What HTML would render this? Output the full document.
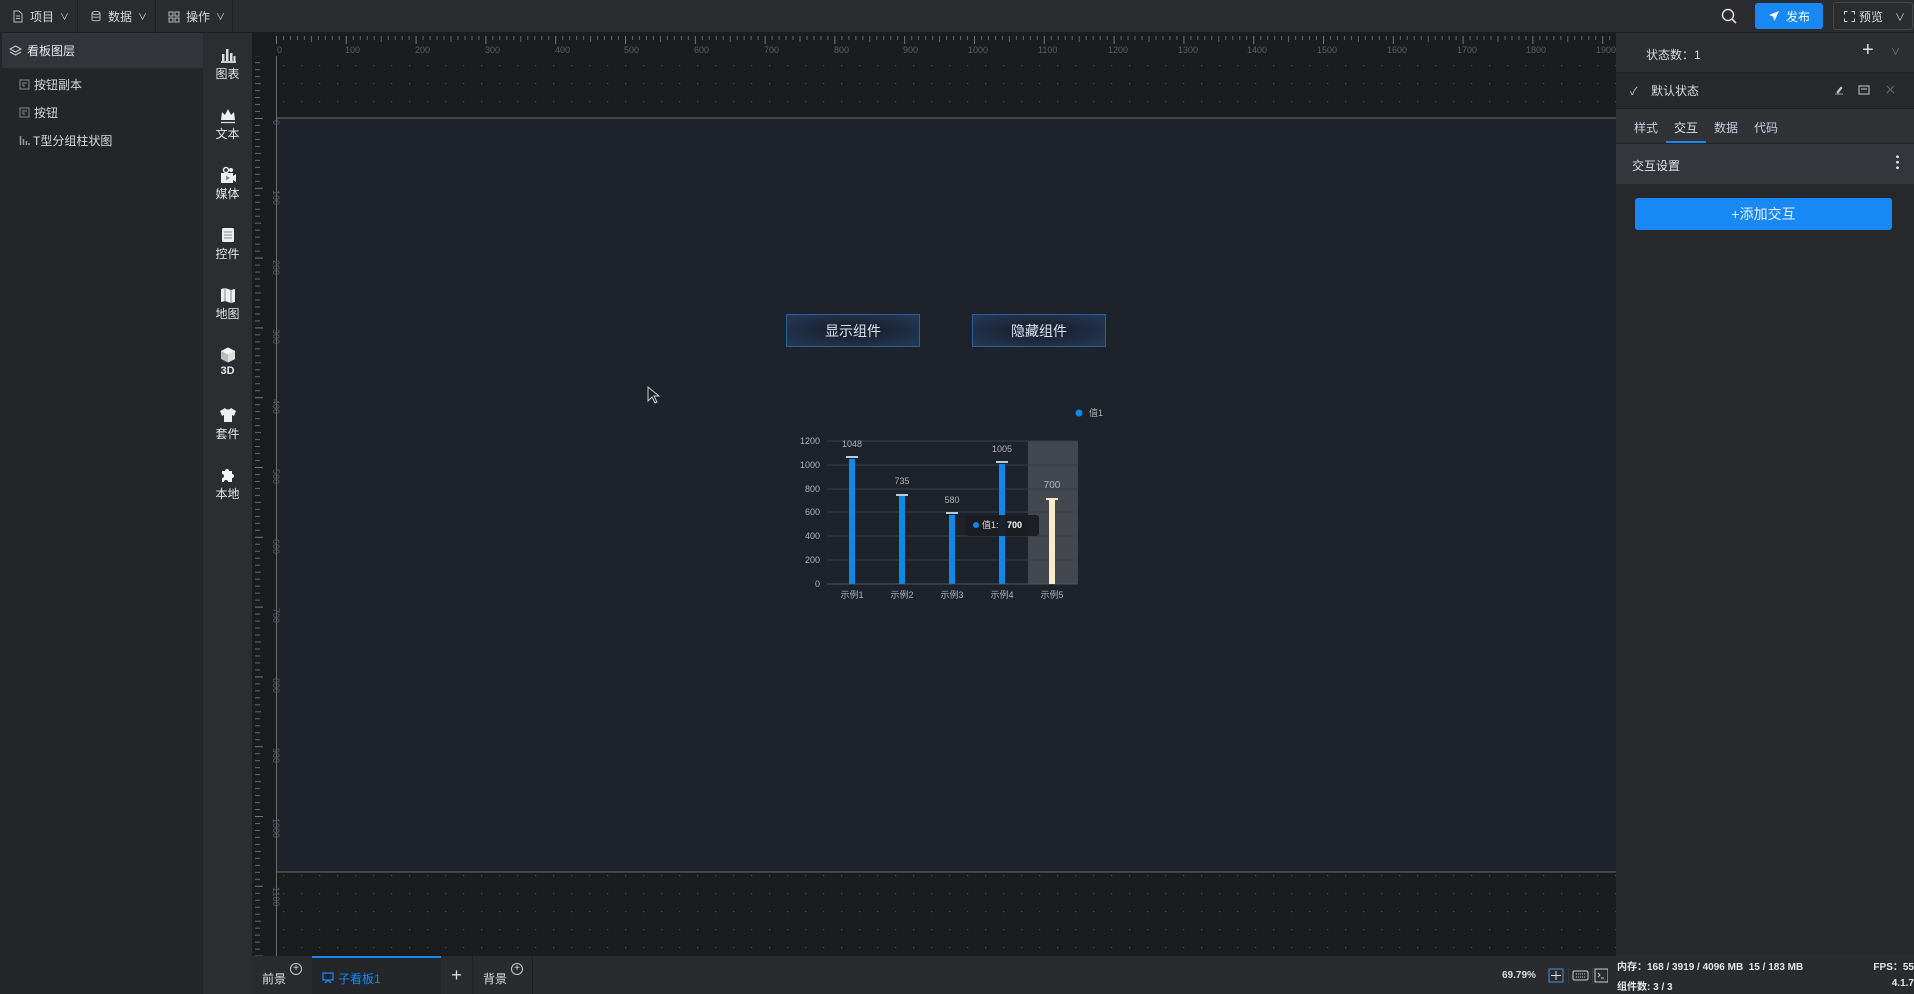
<!DOCTYPE html>
<html><head><meta charset="utf-8"><style>
*{margin:0;padding:0;box-sizing:border-box}
body{width:1914px;height:994px;overflow:hidden;background:#1a1b1d;font-family:"Liberation Sans","Noto Sans CJK SC",sans-serif;color:#d0d2d6;font-size:12px;position:relative}
.abs{position:absolute}
#top{left:0;top:0;width:1914px;height:33px;background:#2b2c30;border-bottom:1px solid #1c1d20}
.menu{top:0;height:33px;display:flex;align-items:center;gap:6px;color:#d6d8dc;font-size:12px;padding-left:12px;border-right:1px solid #202124}
#left{left:0;top:33px;width:203px;height:961px;background:#242528}
#icons{left:203px;top:33px;width:49px;height:961px;background:#2c2d31}
.ic{position:absolute;left:0;width:49px;text-align:center;color:#e6e7ea;font-size:12px}
.ic svg{display:block;margin:0 auto 1px}
#right{left:1616px;top:33px;width:298px;height:922px;background:#27282c}
</style></head><body>
<div id="top" class="abs">
  <div class="menu abs" style="left:0;width:78px"><svg width="12" height="13" viewBox="0 0 12 13"><path d="M2 1h5l3 3v8H2z M4 6h4M4 8.5h4" fill="none" stroke="#bbb" stroke-width="1"/></svg>项目<span style="font-size:9px">∨</span></div>
  <div class="menu abs" style="left:78px;width:78px"><svg width="12" height="13" viewBox="0 0 12 13"><ellipse cx="6" cy="3" rx="4" ry="1.6" fill="none" stroke="#bbb"/><path d="M2 3v7c0 1 8 1 8 0V3M2 6.5c0 1 8 1 8 0" fill="none" stroke="#bbb"/></svg>数据<span style="font-size:9px">∨</span></div>
  <div class="menu abs" style="left:156px;width:77px"><svg width="12" height="12" viewBox="0 0 12 12"><path d="M1 1h4v4H1zM7 1h4v4H7zM1 7h4v4H1zM7 7h4v4H7z" fill="none" stroke="#bbb"/></svg>操作<span style="font-size:9px">∨</span></div>
  <svg class="abs" style="left:1721px;top:8px" width="17" height="17" viewBox="0 0 17 17"><circle cx="7" cy="7" r="5.5" fill="none" stroke="#ddd" stroke-width="1.5"/><path d="M11 11l4 4" stroke="#ddd" stroke-width="1.6"/></svg>
  <div class="abs" style="left:1755px;top:3px;width:68px;height:26px;background:#1888f5;border-radius:3px;color:#fff;font-size:12px;display:flex;align-items:center;justify-content:center;gap:6px"><svg width="12" height="12" viewBox="0 0 12 12"><path d="M11 1L1 5l4 1.5 1.5 4.5z" fill="#fff"/></svg>发布</div>
  <div class="abs" style="left:1833px;top:2px;width:80px;height:28px;border:1px solid #45474c;border-radius:3px;color:#ddd;font-size:12px;display:flex;align-items:center;padding-left:10px;gap:4px"><svg width="11" height="11" viewBox="0 0 11 11"><path d="M0.5 3.5v-3h3M7.5 0.5h3v3M10.5 7.5v3h-3M3.5 10.5h-3v-3" fill="none" stroke="#ccc"/></svg>预览<span style="margin-left:8px;font-size:10px">∨</span></div>
</div>

<div id="left" class="abs">
  <div class="abs" style="left:2px;top:0;width:201px;height:35px;background:#333439;display:flex;align-items:center;padding-left:7px;gap:5px;font-size:12px;color:#e8e9ec"><svg width="13" height="12" viewBox="0 0 13 12"><path d="M6.5 1L12 4 6.5 7 1 4z M1 7l5.5 3 5.5-3" fill="none" stroke="#ccc"/></svg>看板图层</div>
  <div class="abs" style="left:19px;top:43px;font-size:12px;color:#d8d9dc;display:flex;gap:4px;align-items:center"><svg width="11" height="11" viewBox="0 0 11 11"><path d="M1 1h9v9H1z M3 4h5M3 6h2v2" fill="none" stroke="#888"/></svg>按钮副本</div>
  <div class="abs" style="left:19px;top:71px;font-size:12px;color:#d8d9dc;display:flex;gap:4px;align-items:center"><svg width="11" height="11" viewBox="0 0 11 11"><path d="M1 1h9v9H1z M3 4h5M3 6h2v2" fill="none" stroke="#888"/></svg>按钮</div>
  <div class="abs" style="left:19px;top:99px;font-size:12px;color:#d8d9dc;display:flex;gap:3px;align-items:center"><svg width="11" height="11" viewBox="0 0 11 11"><path d="M1.5 1v9M4.5 4v6M7.5 6v4M10 8v2" stroke="#999" stroke-width="1.5"/></svg>T型分组柱状图</div>
</div>

<div id="icons" class="abs">
  <div class="ic" style="top:13px"><svg width="18" height="18" viewBox="0 0 18 18"><path d="M2 16h15" stroke="#fff" stroke-width="1.5"/><rect x="3" y="8" width="2.5" height="7" fill="#ddd"/><rect x="7" y="3" width="2.5" height="12" fill="#ddd"/><rect x="11" y="7" width="2.5" height="8" fill="#ddd"/><rect x="14.5" y="10" width="2" height="5" fill="#ddd"/></svg>图表</div>
  <div class="ic" style="top:73px"><svg width="18" height="18" viewBox="0 0 18 18"><path d="M2 14l1-8 3 3 3-6 3 6 3-3 1 8z" fill="#eee"/><path d="M2 16.5h14" stroke="#ddd" stroke-width="1.3"/></svg>文本</div>
  <div class="ic" style="top:133px"><svg width="18" height="18" viewBox="0 0 18 18"><circle cx="7" cy="4" r="2.5" fill="none" stroke="#eee" stroke-width="1.5"/><circle cx="12" cy="4" r="2" fill="#eee"/><rect x="2" y="7" width="12" height="10" fill="#eee"/><path d="M14 10l3-2v8l-3-2z" fill="#eee"/><path d="M7 9.5v5l4-2.5z" fill="#888"/></svg>媒体</div>
  <div class="ic" style="top:193px"><svg width="18" height="18" viewBox="0 0 18 18"><rect x="3" y="2" width="12" height="14" rx="1.5" fill="#eee"/><path d="M5 6h8M5 9h8M5 12h8" stroke="#888"/></svg>控件</div>
  <div class="ic" style="top:253px"><svg width="18" height="18" viewBox="0 0 18 18"><path d="M2 3l4-1 6 2 4-1v13l-4 1-6-2-4 1z" fill="#eee"/><path d="M6 2v13M12 4v13" stroke="#888"/></svg>地图</div>
  <div class="ic" style="top:313px;font-weight:bold;font-size:11px"><svg width="18" height="18" viewBox="0 0 18 18"><path d="M9 1.5l7 3.5v8l-7 3.5-7-3.5v-8z" fill="#bbb"/><path d="M2 5l7 3.5L16 5 9 1.5z" fill="#f2f2f2"/><path d="M9 8.5v8l7-3.5v-8z" fill="#ddd"/></svg>3D</div>
  <div class="ic" style="top:373px"><svg width="18" height="18" viewBox="0 0 18 18"><path d="M6 2L1 5l2 5 2-1v7h8V9l2 1 2-5-5-3c-1 2-5 2-6 0z" fill="#eee"/></svg>套件</div>
  <div class="ic" style="top:433px"><svg width="18" height="18" viewBox="0 0 18 18"><path d="M3 5h3a2 2 0 1 1 4 0h3v3a2 2 0 1 1 0 4v4H9a2 2 0 1 0-4 0H3v-4a2 2 0 1 0 0-4z" fill="#f4f4f4"/></svg>本地</div>
</div>

<!-- rulers & canvas -->
<svg class="abs" style="left:252px;top:33px" width="1364" height="923" viewBox="0 0 1364 923">
  <defs>
    <pattern id="ht" x="24" y="0" width="69.8" height="24" patternUnits="userSpaceOnUse">
      <rect x="0" y="3" width="1" height="8" fill="#777"/>
      <rect x="6.98" y="3" width="1" height="4" fill="#666"/><rect x="13.96" y="3" width="1" height="4" fill="#666"/><rect x="20.94" y="3" width="1" height="4" fill="#666"/><rect x="27.92" y="3" width="1" height="4" fill="#666"/><rect x="34.9" y="3" width="1" height="6" fill="#666"/><rect x="41.88" y="3" width="1" height="4" fill="#666"/><rect x="48.86" y="3" width="1" height="4" fill="#666"/><rect x="55.84" y="3" width="1" height="4" fill="#666"/><rect x="62.82" y="3" width="1" height="4" fill="#666"/>
    </pattern>
    <pattern id="vt" x="0" y="85" width="24" height="69.8" patternUnits="userSpaceOnUse">
      <rect x="3" y="0" width="8" height="1" fill="#777"/>
      <rect x="3" y="6.98" width="5" height="1" fill="#666"/><rect x="3" y="13.96" width="5" height="1" fill="#666"/><rect x="3" y="20.94" width="5" height="1" fill="#666"/><rect x="3" y="27.92" width="5" height="1" fill="#666"/><rect x="3" y="34.9" width="6" height="1" fill="#666"/><rect x="3" y="41.88" width="5" height="1" fill="#666"/><rect x="3" y="48.86" width="5" height="1" fill="#666"/><rect x="3" y="55.84" width="5" height="1" fill="#666"/><rect x="3" y="62.82" width="5" height="1" fill="#666"/>
    </pattern>
    <pattern id="dots" x="31" y="32" width="18" height="18" patternUnits="userSpaceOnUse"><rect x="0" y="0" width="1.2" height="1.2" fill="#4a4b50"/></pattern>
  </defs>
  <rect x="0" y="0" width="1364" height="923" fill="#1b1c1e"/>
  <rect x="24" y="23" width="1340" height="900" fill="url(#dots)"/>
  <rect x="24" y="85" width="1340" height="754" fill="#1e222b"/>
  <line x1="24" y1="85" x2="1364" y2="85" stroke="#6a6c70" stroke-width="1"/>
  <line x1="24" y1="839" x2="1364" y2="839" stroke="#6a6c70" stroke-width="1"/>
  <line x1="24.5" y1="23" x2="24.5" y2="923" stroke="#6a6c70"/>
  <rect x="24" y="0" width="1340" height="14" fill="url(#ht)"/>
  <rect x="0" y="23" width="14" height="900" fill="url(#vt)"/>
  <g fill="#5c5e63" font-size="9" font-family="Liberation Sans">
    <text x="25" y="20">0</text>
    <text x="93" y="20">100</text><text x="163" y="20">200</text><text x="233" y="20">300</text><text x="303" y="20">400</text><text x="372" y="20">500</text><text x="442" y="20">600</text><text x="512" y="20">700</text><text x="582" y="20">800</text><text x="651" y="20">900</text><text x="716" y="20">1000</text><text x="786" y="20">1100</text><text x="856" y="20">1200</text><text x="926" y="20">1300</text><text x="995" y="20">1400</text><text x="1065" y="20">1500</text><text x="1135" y="20">1600</text><text x="1205" y="20">1700</text><text x="1274" y="20">1800</text><text x="1344" y="20">1900</text>
  </g>
  <g fill="#5c5e63" font-size="9" font-family="Liberation Sans">
    <text transform="translate(21,87) rotate(90)">0</text>
    <text transform="translate(21,157) rotate(90)">100</text><text transform="translate(21,227) rotate(90)">200</text><text transform="translate(21,296) rotate(90)">300</text><text transform="translate(21,366) rotate(90)">400</text><text transform="translate(21,436) rotate(90)">500</text><text transform="translate(21,506) rotate(90)">600</text><text transform="translate(21,575) rotate(90)">700</text><text transform="translate(21,645) rotate(90)">800</text><text transform="translate(21,715) rotate(90)">900</text><text transform="translate(21,785) rotate(90)">1000</text><text transform="translate(21,854) rotate(90)">1100</text>
  </g>
</svg>

<!-- buttons -->
<div class="abs" style="left:786px;top:314px;width:134px;height:33px;border:1px solid #2f5e96;background:radial-gradient(ellipse at center,#1b2433 30%,#243a5a 100%);color:#d8e4f2;font-size:14px;display:flex;align-items:center;justify-content:center">显示组件</div>
<div class="abs" style="left:972px;top:314px;width:134px;height:33px;border:1px solid #2f5e96;background:radial-gradient(ellipse at center,#1b2433 30%,#243a5a 100%);color:#d8e4f2;font-size:14px;display:flex;align-items:center;justify-content:center">隐藏组件</div>

<!-- cursor -->
<svg class="abs" style="left:647px;top:386px" width="14" height="18" viewBox="0 0 14 18"><path d="M1 1v14l4-4 3 6 2-1-3-6h5z" fill="#1e222b" stroke="#ccc"/></svg>

<!-- chart -->
<svg class="abs" style="left:780px;top:400px" width="330" height="205" viewBox="780 400 330 205" font-family="Liberation Sans,Noto Sans CJK SC,sans-serif">
  <rect x="1028" y="441" width="50" height="143" fill="#434850"/>
  <g stroke="#3a3e46" stroke-width="1"><line x1="827" y1="441" x2="1078" y2="441"/><line x1="827" y1="465" x2="1078" y2="465"/><line x1="827" y1="489" x2="1078" y2="489"/><line x1="827" y1="512" x2="1078" y2="512"/><line x1="827" y1="536" x2="1078" y2="536"/><line x1="827" y1="560" x2="1078" y2="560"/><line x1="827" y1="584" x2="1078" y2="584" stroke="#50545c"/></g>
  <g fill="#aeb2b8" font-size="9" text-anchor="end"><text x="820" y="444">1200</text><text x="820" y="468">1000</text><text x="820" y="492">800</text><text x="820" y="515">600</text><text x="820" y="539">400</text><text x="820" y="563">200</text><text x="820" y="587">0</text></g>
  <g fill="#1088e6"><rect x="849" y="459" width="6" height="125"/><rect x="899" y="496" width="6" height="88"/><rect x="949" y="515" width="6" height="69"/><rect x="999" y="464" width="6" height="120"/></g>
  <rect x="1049" y="500" width="6" height="84" fill="#f7ebcb"/>
  <g fill="#b8cce0"><rect x="846" y="456" width="12" height="2"/><rect x="896" y="494" width="12" height="2"/><rect x="946" y="512" width="12" height="2"/><rect x="996" y="461" width="12" height="2"/></g>
  <rect x="1046" y="498" width="12" height="2" fill="#f3e8c8"/>
  <g fill="#aeb2b8" font-size="9" text-anchor="middle"><text x="852" y="447">1048</text><text x="902" y="484">735</text><text x="952" y="503">580</text><text x="1002" y="452">1005</text><text x="1052" y="488" font-size="10">700</text></g>
  <g fill="#aeb2b8" font-size="9" text-anchor="middle"><text x="852" y="598">示例1</text><text x="902" y="598">示例2</text><text x="952" y="598">示例3</text><text x="1002" y="598">示例4</text><text x="1052" y="598">示例5</text></g>
  <circle cx="1079" cy="413" r="3.5" fill="#1088e6"/><text x="1089" y="416" fill="#aeb2b8" font-size="9">值1</text>
  <rect x="965" y="515" width="74" height="21" rx="3" fill="#1b1d22" opacity="0.95"/>
  <circle cx="976" cy="525" r="3" fill="#1088e6"/><text x="982" y="528" fill="#ddd" font-size="9">值1:</text><text x="1007" y="528" fill="#fff" font-size="9" font-weight="bold">700</text>
</svg>

<!-- bottom tabs -->
<div class="abs" style="left:252px;top:956px;width:1364px;height:38px;background:#2a2b2f"></div>
<div class="abs" style="left:252px;top:956px;width:60px;height:38px;font-size:12px;color:#ddd;padding:14px 0 0 10px">前景<span style="position:absolute;left:38px;top:7px;width:12px;height:12px;border:1px solid #ccc;border-radius:50%;font-size:10px;line-height:10px;text-align:center">+</span></div>
<div class="abs" style="left:312px;top:956px;width:129px;height:38px;background:#25262a;border-top:2px solid #1888f5;color:#1888f5;font-size:12px;padding:12px 0 0 10px;display:flex;gap:4px;align-items:flex-start"><svg width="12" height="12" viewBox="0 0 12 12" style="margin-top:2px"><path d="M1 1h10v7H1zM3 11l3-3 3 3" fill="none" stroke="#1888f5" stroke-width="1.3"/></svg>子看板1</div>
<div class="abs" style="left:441px;top:956px;width:32px;height:38px;border-right:1px solid #202124;color:#ddd;font-size:18px;text-align:center;line-height:38px">+</div>
<div class="abs" style="left:473px;top:956px;width:60px;height:38px;font-size:12px;color:#ddd;padding:14px 0 0 10px;border-right:1px solid #202124">背景<span style="position:absolute;left:38px;top:7px;width:12px;height:12px;border:1px solid #ccc;border-radius:50%;font-size:10px;line-height:10px;text-align:center">+</span></div>
<div class="abs" style="left:1502px;top:970px;font-size:10px;color:#ddd;font-weight:bold">69.79%</div>
<svg class="abs" style="left:1548px;top:968px" width="60" height="16" viewBox="0 0 60 16"><rect x="1" y="1" width="14" height="13" fill="none" stroke="#4a90d0"/><path d="M8 3v9M3 7.5h10" stroke="#ddd"/><line x1="20.5" y1="0" x2="20.5" y2="16" stroke="#3a3b3f"/><rect x="25" y="3" width="15" height="9" rx="1.5" fill="none" stroke="#ccc"/><path d="M28 6h9M28 9h9" stroke="#ccc" stroke-dasharray="1 1"/><line x1="44.5" y1="0" x2="44.5" y2="16" stroke="#3a3b3f"/><rect x="47" y="1" width="13" height="13" fill="none" stroke="#ccc"/><path d="M50 5l2 2-2 2M53 10h3" fill="none" stroke="#ccc"/></svg>

<!-- right panel -->
<div id="right" class="abs">
  <div class="abs" style="left:0;top:0;width:298px;height:40px;background:#2d2e32;border-bottom:1px solid #202124"><span class="abs" style="left:30px;top:13px;font-size:12px;color:#d8d9dc">状态数：1</span><span class="abs" style="left:246px;top:6px;font-size:20px;color:#ddd">+</span><span class="abs" style="left:275px;top:12px;font-size:9px;color:#888">∨</span></div>
  <div class="abs" style="left:0;top:40px;width:298px;height:35px;background:#28292d"><span class="abs" style="left:14px;top:10px;font-size:11px;color:#ccc">✓</span><span class="abs" style="left:35px;top:9px;font-size:12px;color:#d8d9dc">默认状态</span>
    <svg class="abs" style="left:218px;top:11px" width="80" height="12" viewBox="0 0 80 12"><path d="M1 10h8M3 8l4-5 1 1-4 5z" fill="#ccc" stroke="#ccc" stroke-width="0.8"/><rect x="25" y="2" width="10" height="8" fill="none" stroke="#ccc"/><path d="M27 5h6" stroke="#ccc"/><path d="M53 2l7 7M60 2l-7 7" stroke="#666" stroke-width="1.2"/></svg></div>
  <div class="abs" style="left:0;top:75px;width:298px;height:36px;background:#313236;border-top:1px solid #202124;border-bottom:1px solid #202124">
    <span class="abs" style="left:18px;top:10px;font-size:12px;color:#ccd">样式</span>
    <span class="abs" style="left:58px;top:10px;font-size:12px;color:#e0e2e6">交互</span>
    <span class="abs" style="left:50px;top:32px;width:40px;height:2px;background:#1888f5"></span>
    <span class="abs" style="left:98px;top:10px;font-size:12px;color:#ccd">数据</span>
    <span class="abs" style="left:138px;top:10px;font-size:12px;color:#ccd">代码</span>
  </div>
  <div class="abs" style="left:0;top:111px;width:298px;height:40px;background:#35363b"><span class="abs" style="left:16px;top:13px;font-size:12px;color:#e0e2e6">交互设置</span><span class="abs" style="left:280px;top:10px;width:3px;height:16px;background:radial-gradient(circle,#ddd 1.3px,transparent 1.6px) 0 0/3px 5.5px"></span></div>
  <div class="abs" style="left:19px;top:165px;width:257px;height:32px;background:#1888f5;border-radius:3px;color:#e8f2ff;font-size:14px;text-align:center;line-height:32px">+添加交互</div>
</div>
<div class="abs" style="left:1616px;top:955px;width:298px;height:39px;background:#2a2b2f;font-size:10px;font-weight:bold;color:#e6e6e6">
  <span class="abs" style="left:1px;top:3px">内存：168 / 3919 / 4096 MB&nbsp; 15 / 183 MB</span>
  <span class="abs" style="right:0;top:3px">FPS：55</span>
  <span class="abs" style="left:1px;top:23px">组件数: 3 / 3</span>
  <span class="abs" style="right:0;top:23px">4.1.7</span>
</div>
</body></html>
